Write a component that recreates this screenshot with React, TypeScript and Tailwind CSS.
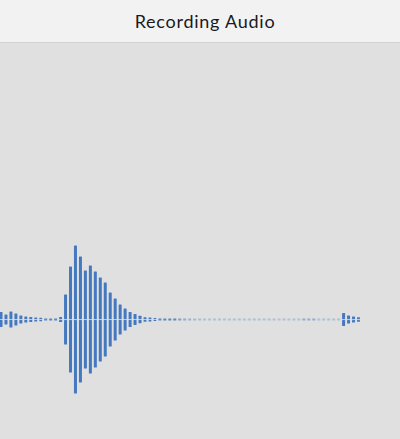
import React from 'react';

// half-heights of the bars, one every ~5px from the left edge
const LEFT = [7.5, 5, 8, 6, 4, 3, 2.5, 2, 1.7, 1.4, 1.4, 1.4, 2.5];
const BURST = [25, 53, 74, 63, 49, 54, 48, 42, 37, 27, 21, 15, 11, 7.5, 5.5, 3.8, 2.3, 2, 1.6, 1.3, 1.3, 1.2, 1.2];
const TAIL = [6.5, 4, 3, 2.3];

type Bar = { h: number; o: number };

const buildBars = (): Bar[] => {
  const bars: Bar[] = [];
  LEFT.forEach(h => bars.push({ h, o: 1 }));
  BURST.forEach(h => bars.push({ h, o: 1 }));
  // quiet stretch, drawn faint
  const fade = [0.75, 0.6, 0.5, 0.45, 0.4];
  while (bars.length < 69) {
    const i = bars.length;
    let o = i - 36 < fade.length && i >= 36 ? fade[i - 36] : 0.35;
    if (i >= 61 && i <= 63) o = 0.6;
    bars.push({ h: 1, o });
  }
  TAIL.forEach(h => bars.push({ h, o: 1 }));
  return bars;
};

const Waveform: React.FC = () => {
  const bars = buildBars();
  const c = 319.5 - 43;
  const pitch = 4.965;

  return (
    <svg width="400" height="396" viewBox="0 0 400 396" className="block">
      {bars.map((b, i) => {
        const x = 1 + i * pitch - 1.5;
        if (b.h <= 1.5) {
          return <rect key={i} x={x} y={c - 1} width={3} height={2} fill="#4479c0" opacity={b.o * 0.85} />;
        }
        return (
          <g key={i} opacity={b.o}>
            <rect x={x} y={c - b.h} width={3} height={b.h - 0.5} rx={0.6} fill="#4479c0" />
            <rect x={x} y={c + 0.5} width={3} height={b.h - 0.5} rx={0.6} fill="#4479c0" />
            <rect x={x} y={c - 0.5} width={3} height={1} fill="#bccbe0" />
          </g>
        );
      })}
    </svg>
  );
};

export default function App() {
  return (
    <div className="w-[400px] h-[439px] bg-[#e0e0e0] flex flex-col overflow-hidden">
      <header className="h-[43px] shrink-0 bg-[#f2f2f2] border-b border-[#d3d3d3] flex items-center justify-center pl-[10px]">
        <h1 className="text-[18px] text-[#1a1a1a] font-['Lato',sans-serif] tracking-[0.75px] leading-none">
          Recording Audio
        </h1>
      </header>
      <Waveform />
    </div>
  );
}
